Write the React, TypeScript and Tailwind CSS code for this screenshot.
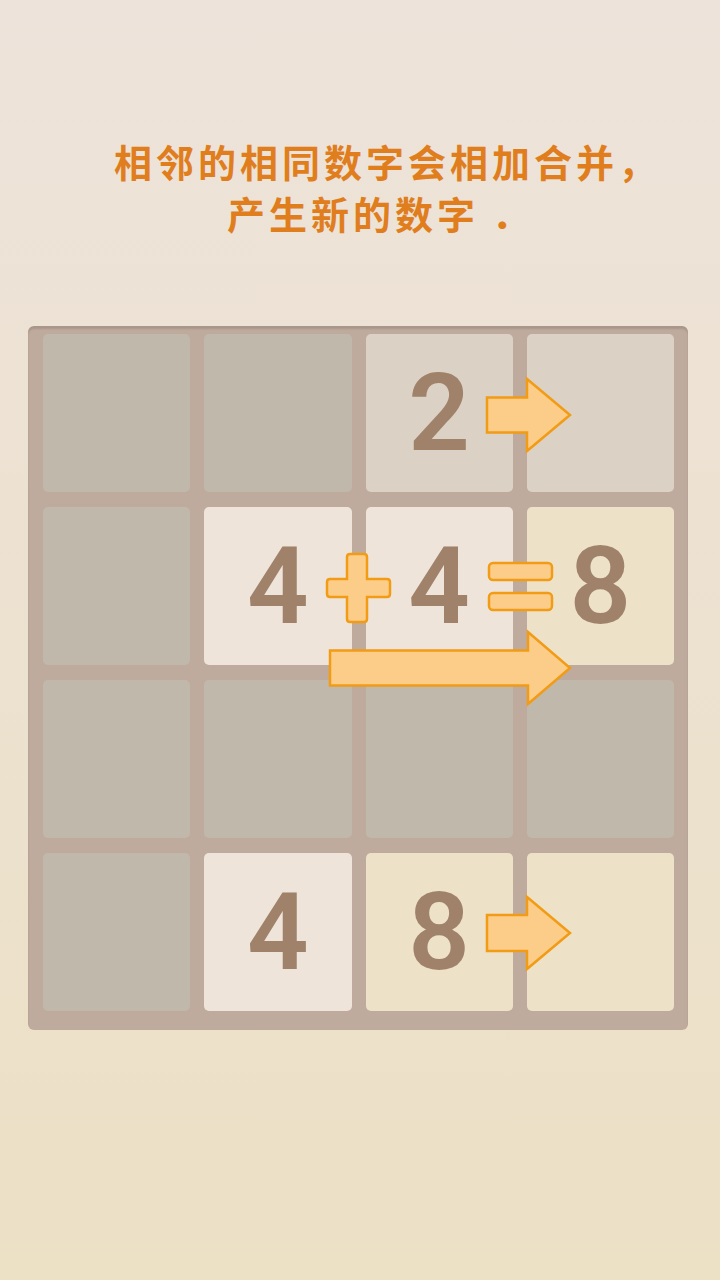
const tiles: { value?: number; bg: string }[] = [
  { bg: 'bg-[#c1b8ac]' },
  { bg: 'bg-[#c1b8ac]' },
  { value: 2, bg: 'bg-[#dbd1c5]' },
  { bg: 'bg-[#dbd1c5]' },
  { bg: 'bg-[#c1b8ac]' },
  { value: 4, bg: 'bg-[#eee4da]' },
  { value: 4, bg: 'bg-[#eee4da]' },
  { value: 8, bg: 'bg-[#ede1c8]' },
  { bg: 'bg-[#c1b8ac]' },
  { bg: 'bg-[#c1b8ac]' },
  { bg: 'bg-[#c1b8ac]' },
  { bg: 'bg-[#c1b8ac]' },
  { bg: 'bg-[#c1b8ac]' },
  { value: 4, bg: 'bg-[#eee4da]' },
  { value: 8, bg: 'bg-[#ede1c8]' },
  { bg: 'bg-[#ede1c8]' },
]

// overlay drawn in board coordinates (board origin = page 28,326)
function Overlay() {
  const fill = '#fccd88'
  const stroke = '#f29b14'
  const arrow = (x1: number, x2: number, xt: number, cy: number, sh: number, hh: number) =>
    `M${x1} ${cy - sh} L${x2} ${cy - sh} L${x2} ${cy - hh} L${xt} ${cy} L${x2} ${cy + hh} L${x2} ${cy + sh} L${x1} ${cy + sh} Z`
  return (
    <svg className="absolute inset-0 pointer-events-none" width="660" height="704" viewBox="0 0 660 704">
      <path d={arrow(459, 499, 542, 89, 17.5, 36)} fill={fill} stroke={stroke} strokeWidth="2.5" />
      <path d={arrow(302, 500, 542, 342, 17.5, 36)} fill={fill} stroke={stroke} strokeWidth="2.5" />
      <path d={arrow(459, 499, 542, 607, 18, 36)} fill={fill} stroke={stroke} strokeWidth="2.5" />
      {/* plus */}
      <path
        d="M319 231 Q319 228 322 228 L336 228 Q339 228 339 231 L339 253 L359 253 Q362 253 362 256 L362 268 Q362 271 359 271 L339 271 L339 293 Q339 296 336 296 L322 296 Q319 296 319 293 L319 271 L302 271 Q299 271 299 268 L299 256 Q299 253 302 253 L319 253 Z"
        fill={fill}
        stroke={stroke}
        strokeWidth="2.5"
      />
      {/* equals */}
      <rect x="461" y="237" width="63" height="17" rx="4" fill={fill} stroke={stroke} strokeWidth="2.5" />
      <rect x="461" y="267" width="63" height="17" rx="4" fill={fill} stroke={stroke} strokeWidth="2.5" />
    </svg>
  )
}

export default function App() {
  return (
    <div className="w-[720px] h-[1280px] bg-gradient-to-b from-[#ede3da] to-[#ece0c5] overflow-hidden">
      <div
        className="pt-[135px] text-[38px] leading-[52px] font-bold tracking-[4px] text-[#e07e1e] whitespace-nowrap"
        style={{ fontFamily: '"Noto Sans CJK SC", sans-serif' }}
      >
        <p className="pl-[114px]">相邻的相同数字会相加合并，</p>
        <p className="pl-[227px]">产生新的数字 ．</p>
      </div>

      <div className="relative ml-[28px] mt-[87px] w-[660px] h-[704px] rounded-[6px] bg-[#bfab9d] shadow-[inset_0_3px_2px_rgba(0,0,0,0.12)] pt-[8px] pl-[15px] pr-[14px] pb-[19px]">
        <div className="grid grid-cols-4 grid-rows-[158px_158px_158px_158px] gap-x-[14px] gap-y-[15px]">
          {tiles.map((t, i) => (
            <div
              key={i}
              className={`${t.bg} rounded-[5px] flex items-center justify-center text-[#a0826a] text-[108px] font-semibold`}
              style={{ fontFamily: 'Roboto, "Liberation Sans", sans-serif' }}
            >
              {t.value}
            </div>
          ))}
        </div>
        <Overlay />
      </div>
    </div>
  )
}
